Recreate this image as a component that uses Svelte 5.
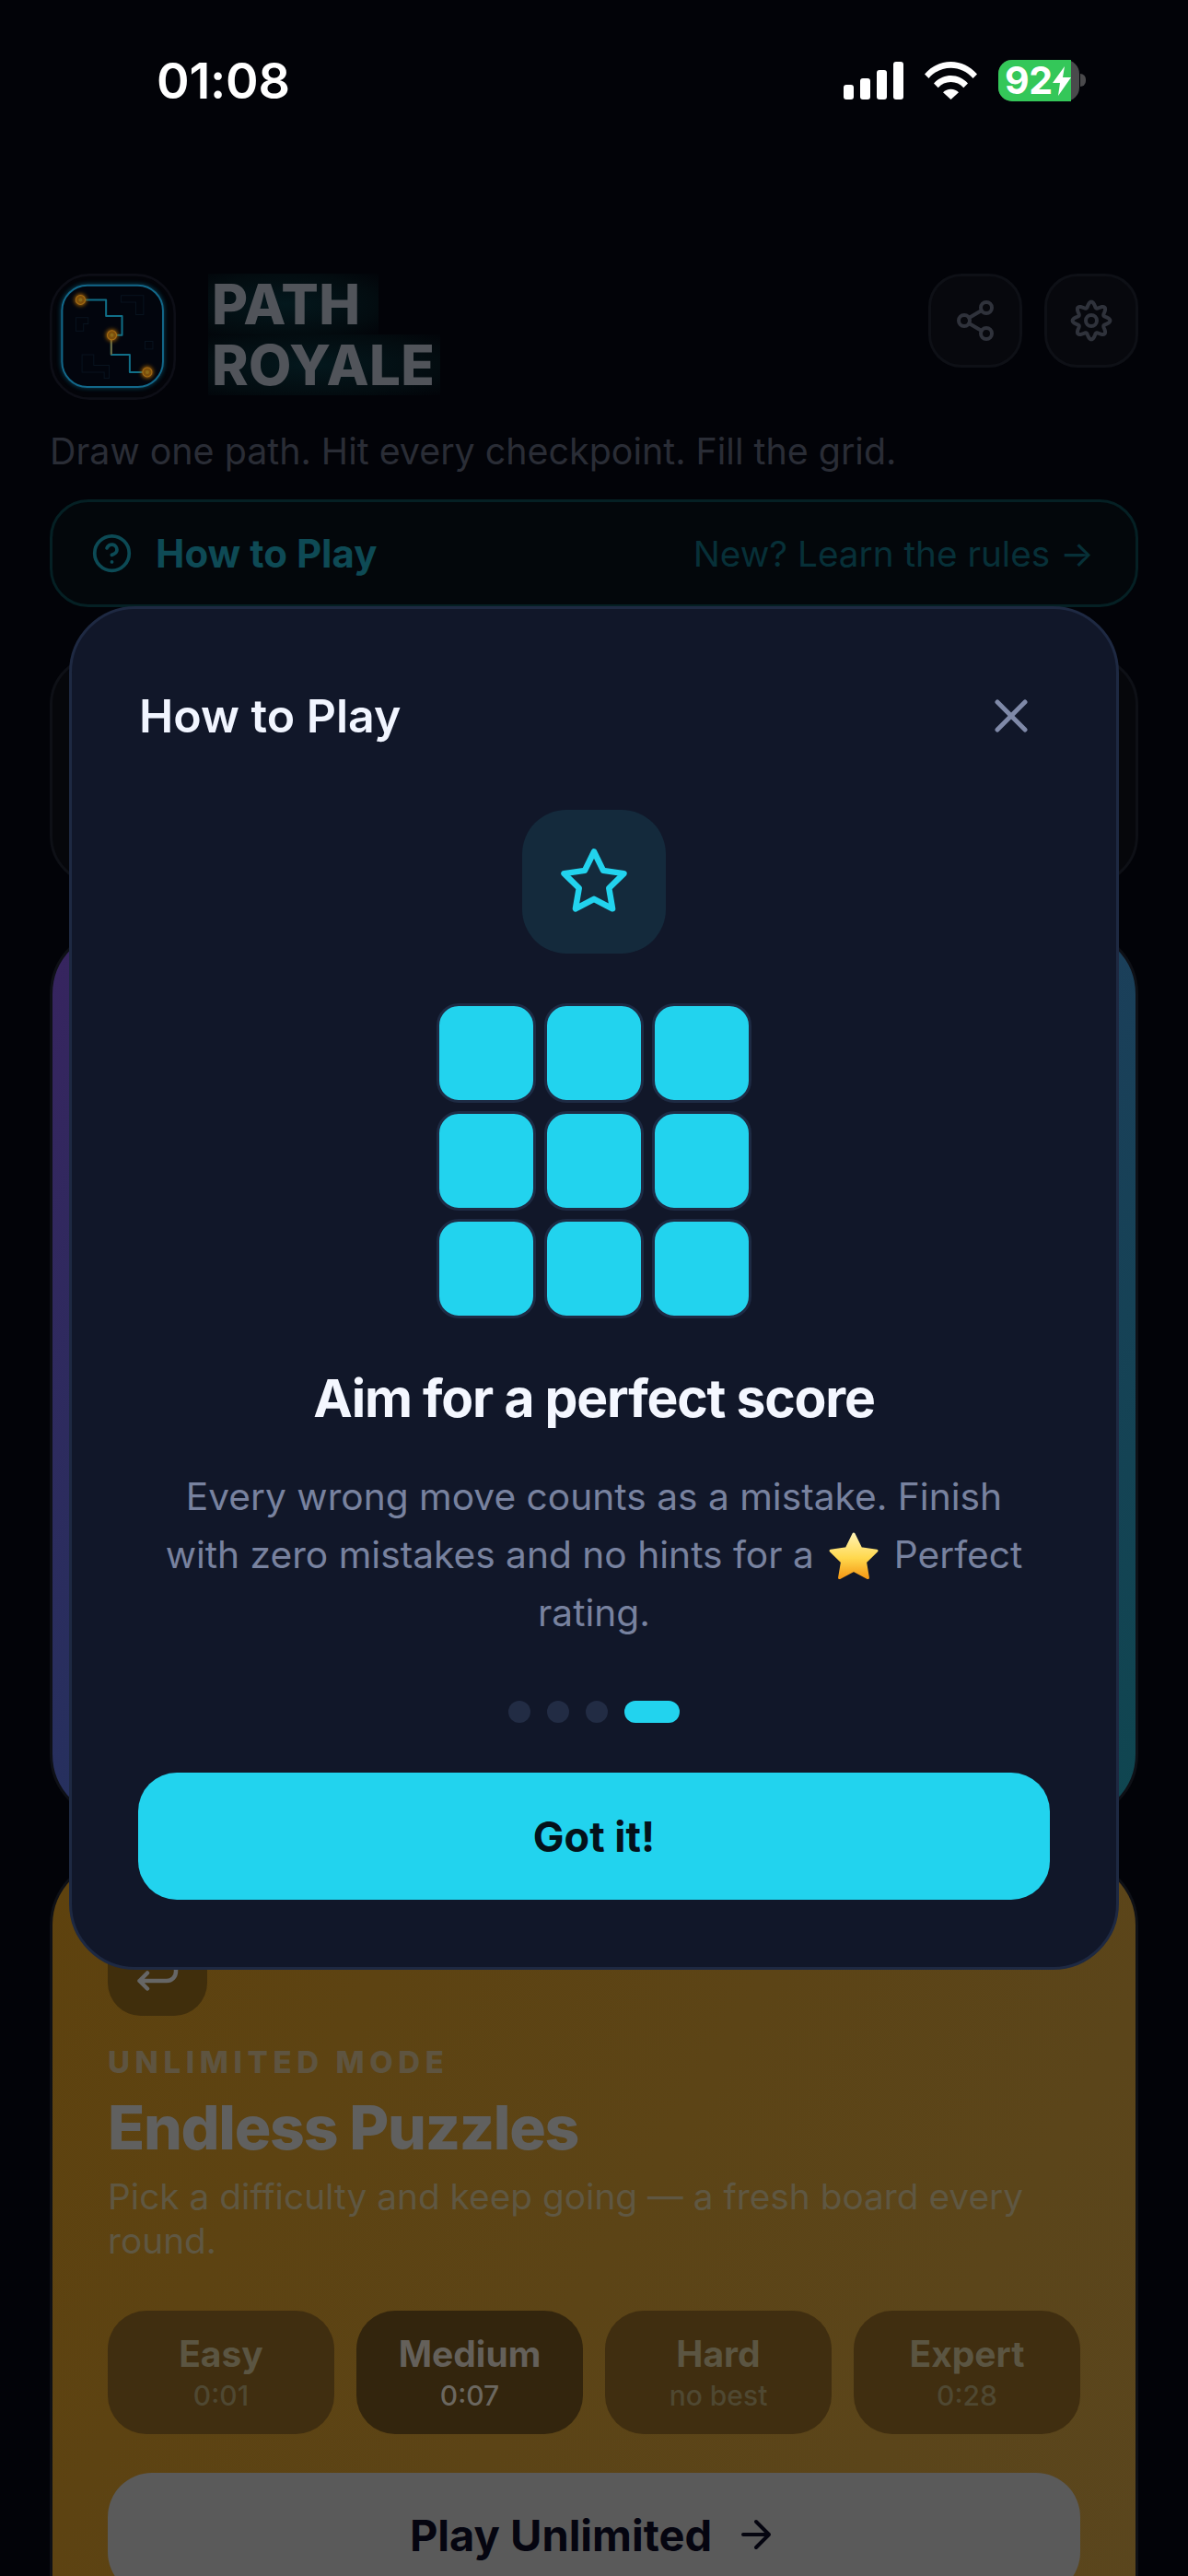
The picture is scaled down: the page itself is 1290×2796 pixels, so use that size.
<script>
  const gearPoints = [];
  for (let i = 0; i < 144; i++) {
    const t = (i / 144) * Math.PI * 2;
    const r = 8.7 + 1.5 * Math.cos(8 * t);
    gearPoints.push(`${(12 + r * Math.sin(t)).toFixed(2)} ${(12 - r * Math.cos(t)).toFixed(2)}`);
  }
  const gear = 'M' + gearPoints.join('L') + 'Z';
  const levels = [
    { name: 'Easy', best: '0:01' },
    { name: 'Medium', best: '0:07', active: true },
    { name: 'Hard', best: 'no best' },
    { name: 'Expert', best: '0:28' }
  ];
  const cells = Array.from({ length: 9 });
  const bars = [16, 23, 32, 41];
</script>

<div class="screen">
  <div class="status">
    <span class="time">01:08</span>
    <div class="indicators">
      <div class="signal">
        {#each bars as h}<i class="bar" style="height:{h}px"></i>{/each}
      </div>
      <svg class="wifi" viewBox="0 0 57 41" width="57" height="41" fill="#fff">
        <path d="M0 13.5C7.500 4.800 17.500 0 28.500 0S49.500 4.800 57 13.500l-4.500 4.500C46.300 10.800 37.800 6.800 28.500 6.800S10.700 10.800 4.500 18z" />
        <path d="M10 23.500C14.800 18.200 21.300 15 28.500 15S42.200 18.200 47 23.500l-4.700 4.700C38.700 24.200 33.800 22 28.500 22S18.300 24.200 14.700 28.200z" />
        <path d="M20 33.300C22.200 31 25.200 29.700 28.500 29.700S34.800 31 37 33.300L28.500 41z" />
      </svg>
      <div class="battery">
        <div class="cell">
          <span class="fill"></span>
          <span class="pct">92</span>
          <svg class="bolt" viewBox="0 0 20 32" width="20" height="32" fill="#fff"><path d="M13 0 0 18h8L6 32 20 12h-9z" /></svg>
        </div>
        <span class="nub"></span>
      </div>
    </div>
  </div>

  <div class="main">
    <header class="head">
      <div class="brand">
        <svg class="logo" viewBox="75 52 410 410" width="137" height="137" fill="none">
          <defs>
            <filter id="glow" x="-60%" y="-60%" width="220%" height="220%"><feGaussianBlur stdDeviation="6" /></filter>
          </defs>
          <rect x="79" y="56" width="402" height="402" rx="125" fill="#030409" stroke="#0d0e16" stroke-width="8" />
          <rect x="115" y="90" width="328" height="330" rx="82" fill="none" stroke="#0e5c78" stroke-width="12" filter="url(#glow)" opacity="0.6" />
          <rect x="115" y="90" width="328" height="330" rx="82" fill="#02050d" stroke="#12688a" stroke-width="6" />
          <g stroke="#08131f" stroke-width="3">
            <path d="M307 123h73v62h-25v-40h-48z" />
            <path d="M160 195h40v20h-15v23h-25z" />
            <rect x="385" y="272" width="25" height="25" />
            <path d="M180 315h38v35h50v42h-16v-20h-72z" />
          </g>
          <path d="M175 137h83v53h52v62h-35v63h60v57h57" stroke="#106f88" stroke-width="6" stroke-linejoin="round" />
          <path d="M275 252v63" stroke="#6d6a3e" stroke-width="6" />
          <g fill="#a5640c" filter="url(#glow)">
            <circle cx="175" cy="137" r="19" />
            <circle cx="277" cy="252" r="19" />
            <circle cx="392" cy="372" r="19" />
          </g>
          <g fill="#7d4f0c" stroke="#a56d12" stroke-width="3">
            <circle cx="175" cy="137" r="15" />
            <circle cx="277" cy="252" r="15" />
            <circle cx="392" cy="372" r="15" />
          </g>
          <g fill="#8c6a18">
            <circle cx="175" cy="137" r="6" />
            <circle cx="277" cy="252" r="6" />
            <circle cx="392" cy="372" r="6" />
          </g>
        </svg>
        <h1 class="title">
          <span class="line first">PATH</span>
          <span class="line">ROYALE</span>
        </h1>
      </div>
      <div class="actions">
        <button class="square" aria-label="Share">
          <svg viewBox="0 0 24 24" width="48" height="48" fill="none" stroke="#2f323b" stroke-width="2" stroke-linecap="round" stroke-linejoin="round">
            <circle cx="18" cy="5" r="3" /><circle cx="6" cy="12" r="3" /><circle cx="18" cy="19" r="3" />
            <path d="m8.590 13.510 6.830 3.980M15.410 6.510l-6.820 3.980" />
          </svg>
        </button>
        <button class="square" aria-label="Settings">
          <svg viewBox="0 0 24 24" width="48" height="48" fill="none" stroke="#2f323b" stroke-width="2" stroke-linejoin="round">
            <path d={gear} /><circle cx="12" cy="12" r="3" />
          </svg>
        </button>
      </div>
    </header>

    <p class="tagline">Draw one path. Hit every checkpoint. Fill the grid.</p>

    <div class="howto">
      <div class="howto-left">
        <svg viewBox="0 0 24 24" width="45" height="45" fill="none" stroke="#0c4a55" stroke-width="2" stroke-linecap="round" stroke-linejoin="round">
          <circle cx="12" cy="12" r="10" /><path d="M9.090 9a3 3 0 0 1 5.830 1c0 2-3 3-3 3M12 17h.01" />
        </svg>
        <span>How to Play</span>
      </div>
      <span class="howto-right">New? Learn the rules →</span>
    </div>

    <div class="card-plain"></div>
    <div class="card-daily"></div>

    <section class="card-unlimited">
      <div class="enter-box">
        <svg viewBox="0 0 60 60" width="60" height="60" fill="none" stroke="#666" stroke-width="4.500" stroke-linecap="round" stroke-linejoin="round">
          <path d="M19 37.500 10.500 46 19 54.500M10.500 46H40a10 10 0 0 0 10-10V0" />
        </svg>
      </div>
      <div class="eyebrow">UNLIMITED MODE</div>
      <h3 class="endless">Endless Puzzles</h3>
      <p class="endless-desc">Pick a difficulty and keep going — a fresh board every round.</p>
      <div class="levels">
        {#each levels as l}
          <div class="level" class:active={l.active}>
            <span class="level-name">{l.name}</span>
            <span class="level-best">{l.best}</span>
          </div>
        {/each}
      </div>
      <button class="play">
        <span>Play Unlimited</span>
        <svg viewBox="0 0 24 24" width="48" height="48" fill="none" stroke="#050510" stroke-width="2" stroke-linecap="round" stroke-linejoin="round">
          <path d="M5 12h14M12 5l7 7-7 7" />
        </svg>
      </button>
    </section>
  </div>

  <div class="overlay">
    <div class="modal">
      <div class="modal-head">
        <h2 class="modal-title">How to Play</h2>
        <svg viewBox="0 0 24 24" width="60" height="60" fill="none" stroke="#7f89a8" stroke-width="2" stroke-linecap="round" stroke-linejoin="round">
          <path d="M18 6 6 18M6 6l12 12" />
        </svg>
      </div>
      <div class="star-box">
        <svg viewBox="0 0 24 24" width="78" height="78" fill="none" stroke="#22d3ee" stroke-width="2" stroke-linecap="round" stroke-linejoin="round">
          <path d="M12 2l3.090 6.260L22 9.270l-5 4.870 1.180 6.880L12 17.770l-6.180 3.250L7 14.140 2 9.270l6.910-1.010z" />
        </svg>
      </div>
      <div class="grid">
        {#each cells as _}<div class="tile"></div>{/each}
      </div>
      <h2 class="step-title">Aim for a perfect score</h2>
      <p class="step-text">Every wrong move counts as a mistake. Finish with zero mistakes and no hints for a <svg class="emoji" viewBox="0 0 24 24" width="60" height="60"><defs><linearGradient id="gold" x1="0" y1="0" x2="0" y2="1"><stop offset="0" stop-color="#fff2b0" /><stop offset="0.55" stop-color="#ffd84d" /><stop offset="1" stop-color="#f59a16" /></linearGradient></defs><path d="M12 2l3.090 6.260L22 9.270l-5 4.870 1.180 6.880L12 17.770l-6.180 3.250L7 14.140 2 9.270l6.910-1.010z" fill="url(#gold)" stroke="url(#gold)" stroke-width="1.200" stroke-linejoin="round" /></svg> Perfect rating.</p>
      <div class="dots">
        <i class="dot"></i><i class="dot"></i><i class="dot"></i><i class="dot on"></i>
      </div>
      <button class="got">Got it!</button>
    </div>
  </div>
</div>

<style>
  :global(body) { margin: 0; background: #020308; }
  * { box-sizing: border-box; }
  .screen {
    position: relative;
    width: 1290px;
    height: 2796px;
    overflow: hidden;
    background: #020308;
    font-family: Inter, "Liberation Sans", sans-serif;
  }
  button { font-family: inherit; border: 0; padding: 0; }

  .status {
    height: 174px;
    display: flex;
    align-items: center;
    justify-content: space-between;
    padding: 0 111px 0 170px;
  }
  .time { font-size: 54px; font-weight: 600; color: #fff; letter-spacing: -0.2px; }
  .indicators { display: flex; align-items: center; gap: 23px; }
  .signal { display: flex; align-items: flex-end; gap: 7px; height: 41px; }
  .bar { width: 11px; background: #fff; border-radius: 3px; display: block; }
  .wifi { display: block; }
  .battery { display: flex; align-items: center; gap: 0; }
  .cell {
    position: relative;
    width: 88px;
    height: 45px;
    border-radius: 15px;
    background: #4a4a4c;
    overflow: visible;
  }
  .fill {
    position: absolute;
    left: 0; top: 0; bottom: 0;
    width: 79px;
    background: #34c759;
    border-radius: 15px 0 0 15px;
  }
  .pct {
    position: absolute;
    left: 7px; top: 0;
    font-size: 41px;
    line-height: 45px;
    font-weight: 700;
    color: #fff;
    letter-spacing: -0.5px;
  }
  .bolt { position: absolute; left: 59px; top: 7px; }
  .nub { width: 6px; height: 14px; background: #4a4a4c; border-radius: 0 6px 6px 0; margin-left: 1px; }

  .main { padding: 123px 54px 0; }
  .head { display: flex; justify-content: space-between; align-items: flex-start; height: 137px; }
  .brand { display: flex; gap: 39px; }
  .logo { display: block; }
  .title { margin: 0; font-size: 60px; line-height: 66px; font-weight: 800; color: #51545a; letter-spacing: 0.3px; }
  .line {
    display: block;
    width: fit-content;
    padding: 0 6px 0 4px;
    margin-left: -4px;
    height: 66px;
    background: radial-gradient(ellipse at 45% 50%, #04181d, #030c10 70%, #020409 100%);
  }
  .line.first { padding-right: 20px; }
  .actions { display: flex; gap: 24px; }
  .square {
    width: 102px;
    height: 102px;
    border-radius: 36px;
    background: #07080d;
    border: 3px solid #0e1016;
    display: flex;
    align-items: center;
    justify-content: center;
  }

  .tagline { margin: 27px 0 23px; font-size: 39.400px; line-height: 58px; color: #2a2d36; }

  .howto {
    height: 117px;
    border: 3px solid #052024;
    border-radius: 42px;
    background: #03070b;
    display: flex;
    align-items: center;
    justify-content: space-between;
    padding: 0 45px 0 42px;
  }
  .howto-left { display: flex; align-items: center; gap: 25px; font-size: 42px; font-weight: 700; color: #0e4a55; }
  .howto-right { font-size: 38.700px; color: #073038; }

  .card-plain {
    margin-top: 52px;
    height: 250px;
    border: 3px solid #0e1016;
    border-radius: 54px;
    background: #06070b;
  }
  .card-daily {
    margin-top: 46px;
    height: 969px;
    border: 3px solid #0e1016;
    border-radius: 72px;
    background: linear-gradient(115deg, #37245f 0%, #26305e 28%, #1b3f5a 72%, #0f4650 100%);
  }
  .card-unlimited {
    margin-top: 41px;
    border: 3px solid #0e1016;
    border-bottom: 0;
    border-radius: 72px 72px 0 0;
    background: linear-gradient(120deg, #5e420e 0%, #5a461e 100%);
    padding: 60px 60px 0;
    height: 900px;
  }
  .enter-box {
    width: 108px;
    height: 108px;
    border-radius: 36px;
    background: #402e0c;
    display: flex;
    align-items: center;
    justify-content: center;
  }
  .eyebrow {
    margin-top: 30px;
    font-size: 33px;
    line-height: 40px;
    font-weight: 800;
    letter-spacing: 5.600px;
    color: #5e5440;
  }
  .endless { margin: 15px 0 0; font-size: 66px; line-height: 72px; font-weight: 800; letter-spacing: -1.300px; color: #60605f; }
  .endless-desc { margin: 15px 0 0; font-size: 38.800px; line-height: 47.500px; color: #5f5742; }
  .levels { margin-top: 53px; display: grid; grid-template-columns: repeat(4, 1fr); gap: 24px; }
  .level {
    height: 134px;
    border-radius: 42px;
    background: #402e10;
    display: flex;
    flex-direction: column;
    align-items: center;
    justify-content: center;
    gap: 3px;
  }
  .level.active { background: #33250d; }
  .level-name { font-size: 39px; line-height: 47px; font-weight: 700; color: #5b5542; }
  .level-best { font-size: 30px; line-height: 38px; font-weight: 500; color: #4f4832; }
  .active .level-name { color: #64605a; }
  .active .level-best { color: #6b675f; }
  .play {
    margin-top: 42px;
    width: 100%;
    height: 134px;
    border-radius: 48px;
    background: #5a5a5a;
    color: #050510;
    font-size: 47px;
    font-weight: 700;
    display: flex;
    align-items: center;
    justify-content: center;
    gap: 24px;
  }

  .overlay {
    position: absolute;
    inset: 0;
    display: flex;
    align-items: center;
    justify-content: center;
  }
  .modal {
    width: 1140px;
    height: 1480px;
    background: #111729;
    border: 3px solid #1e2942;
    border-radius: 72px;
    padding: 74px 72px 0;
    display: flex;
    flex-direction: column;
    align-items: center;
  }
  .modal-head {
    width: 100%;
    height: 84px;
    display: flex;
    align-items: center;
    justify-content: space-between;
    padding: 0 12px 0 1px;
  }
  .modal-title { margin: 0; font-size: 50px; font-weight: 600; color: #f1f5ff; }
  .star-box {
    margin-top: 60px;
    width: 156px;
    height: 156px;
    border-radius: 48px;
    background: #142a3c;
    display: flex;
    align-items: center;
    justify-content: center;
  }
  .grid { margin-top: 54px; display: grid; grid-template-columns: repeat(3, 108px); gap: 9px; }
  .tile { height: 108px; border: 3px solid #1e2b44; border-radius: 24px; background: #22d3ee; }
  .step-title { margin: 54px 0 0; font-size: 57px; line-height: 65px; font-weight: 700; letter-spacing: -1.200px; color: #f4f7ff; white-space: nowrap; }
  .step-text { margin: 43px 0 0; width: 960px; font-size: 40.700px; line-height: 63px; color: #78829f; text-align: center; }
  .emoji { vertical-align: -14px; margin: -4px 2px; }
  .dots { margin-top: 64px; display: flex; gap: 18px; height: 24px; }
  .dot { width: 24px; height: 24px; border-radius: 12px; background: #222c44; display: block; }
  .dot.on { width: 60px; background: #22d3ee; }
  .got {
    margin-top: 54px;
    width: 100%;
    height: 138px;
    border-radius: 42px;
    background: #22d3ee;
    color: #04111a;
    font-size: 45px;
    font-weight: 700;
  }
</style>
